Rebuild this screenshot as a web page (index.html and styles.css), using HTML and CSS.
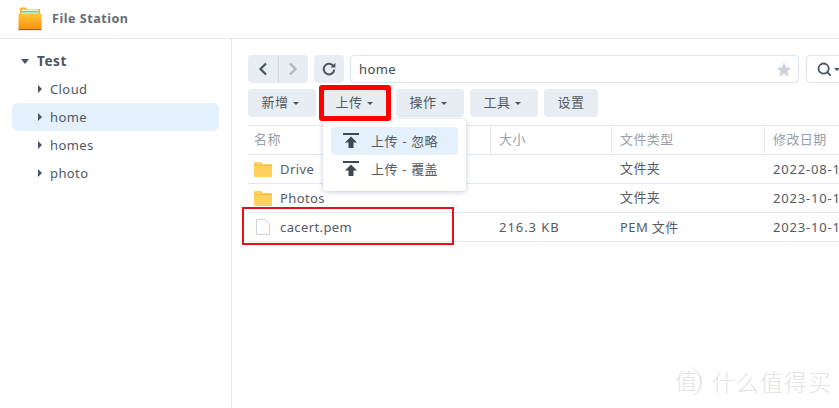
FILE: index.html
```html
<!DOCTYPE html>
<html lang="zh">
<head>
    <meta charset="UTF-8">
    <meta name="viewport" content="width=device-width, initial-scale=1.0">
    <title>File Station</title>
    <link rel="stylesheet" href="styles.css">
</head>
<body>
    <header class="titlebar">
        <svg class="app-icon" width="24" height="24" viewBox="0 0 24 24">
            <defs>
                <linearGradient id="folderFill" x1="0" y1="0" x2="0" y2="1">
                    <stop offset="0" stop-color="#ffc83a"/>
                    <stop offset="1" stop-color="#fb8d0b"/>
                </linearGradient>
            </defs>
            <path d="M2 2 Q2 0.5 3.5 0.5 H8 L9.5 2 H22 V8 H2 Z" fill="#f8ae27"/>
            <rect x="3.5" y="2.5" width="17" height="5" fill="#edf3ea"/>
            <rect x="3.5" y="4" width="17" height="1.5" fill="#6cc9b4"/>
            <path d="M0.5 6.5 H23.5 V22 Q23.5 23 22.5 23 H1.5 Q0.5 23 0.5 22 Z" fill="url(#folderFill)"/>
            <rect x="0.5" y="22" width="23" height="1.2" fill="#8a6a3a"/>
        </svg>
        <span class="app-name">File Station</span>
    </header>

    <div class="window">
        <aside class="sidebar">
            <div class="tree-root"><span class="caret-down"></span>Test</div>
            <div class="tree-item"><span class="caret-right"></span>Cloud</div>
            <div class="tree-item active"><span class="caret-right"></span>home</div>
            <div class="tree-item"><span class="caret-right"></span>homes</div>
            <div class="tree-item"><span class="caret-right"></span>photo</div>
        </aside>

        <main class="content">
            <div class="toolbar">
                <div class="nav-group">
                    <button class="nav-btn">
                        <svg width="10" height="14" viewBox="0 0 10 14"><path d="M8 1.5 L2.5 7 L8 12.5" fill="none" stroke="#4a5360" stroke-width="2.2"/></svg>
                    </button>
                    <button class="nav-btn">
                        <svg width="10" height="14" viewBox="0 0 10 14"><path d="M2 1.5 L7.5 7 L2 12.5" fill="none" stroke="#aeb4bc" stroke-width="2.2"/></svg>
                    </button>
                </div>
                <button class="refresh-btn">
                    <svg width="14" height="14" viewBox="0 0 14 14"><path d="M11.6 4.4 A5.3 5.3 0 1 0 12.3 7.6" fill="none" stroke="#4a5360" stroke-width="2"/><path d="M8.6 5.6 H13.4 V0.8 Z" fill="#4a5360"/></svg>
                </button>
                <div class="path-box">
                    <span>home</span>
                    <svg width="16" height="15" viewBox="0 0 16 15"><path d="M8 0.5 L10 5.4 L15.4 5.8 L11.2 9.2 L12.6 14.5 L8 11.6 L3.4 14.5 L4.8 9.2 L0.6 5.8 L6 5.4 Z" fill="#c9d2dc"/></svg>
                </div>
                <div class="search-box">
                    <svg width="15" height="15" viewBox="0 0 17 17"><circle cx="7.5" cy="7.5" r="5.8" fill="none" stroke="#4a5360" stroke-width="2"/><path d="M11.5 11.5 L15.5 15.5" stroke="#4a5360" stroke-width="2"/></svg>
                    <span class="caret-small"></span>
                </div>
            </div>

            <div class="actions">
                <button class="action">新增<span class="caret-small"></span></button>
                <button class="action">上传<span class="caret-small"></span></button>
                <button class="action">操作<span class="caret-small"></span></button>
                <button class="action">工具<span class="caret-small"></span></button>
                <button class="action plain">设置</button>
            </div>

            <div class="file-table">
                <div class="row head">
                    <div class="zh">名称</div>
                    <div class="zh">大小</div>
                    <div class="zh">文件类型</div>
                    <div class="zh">修改日期</div>
                </div>
                <div class="row">
                    <div class="name">
                        <svg width="18" height="15" viewBox="0 0 18 15"><path d="M0 1 Q0 0 1 0 H7 L9 2 H17 Q18 2 18 3 V14 Q18 15 17 15 H1 Q0 15 0 14 Z" fill="#ffd15c"/><rect x="0" y="3" width="18" height="1" fill="#f5bd3d"/></svg>
                        Drive
                    </div>
                    <div></div>
                    <div class="zh">文件夹</div>
                    <div class="num date">2022-08-1</div>
                </div>
                <div class="row">
                    <div class="name">
                        <svg width="18" height="15" viewBox="0 0 18 15"><path d="M0 1 Q0 0 1 0 H7 L9 2 H17 Q18 2 18 3 V14 Q18 15 17 15 H1 Q0 15 0 14 Z" fill="#ffd15c"/><rect x="0" y="3" width="18" height="1" fill="#f5bd3d"/></svg>
                        Photos
                    </div>
                    <div></div>
                    <div class="zh">文件夹</div>
                    <div class="num date">2023-10-1</div>
                </div>
                <div class="row">
                    <div class="name">
                        <svg class="file-icon" width="18" height="16" viewBox="0 0 18 16"><path d="M2.5 0.5 H11 L15.5 4.5 V15.5 H2.5 Z" fill="#fff" stroke="#cdd3da"/></svg>
                        cacert.pem
                    </div>
                    <div class="num">216.3 KB</div>
                    <div class="zh-mixed">PEM 文件</div>
                    <div class="num date">2023-10-1</div>
                </div>
            </div>
        </main>
    </div>

    <!-- overlays -->
    <div class="menu">
        <div class="menu-item active">
            <svg width="16" height="15" viewBox="0 0 16 15"><path d="M0 1 H16" stroke="#3f4751" stroke-width="2"/><path d="M8 3.5 L14 9.5 H10.5 V15 H5.5 V9.5 H2 Z" fill="#3f4751"/></svg>
            上传 - 忽略
        </div>
        <div class="menu-item">
            <svg width="16" height="15" viewBox="0 0 16 15"><path d="M0 1 H16" stroke="#3f4751" stroke-width="2"/><path d="M8 3.5 L14 9.5 H10.5 V15 H5.5 V9.5 H2 Z" fill="#3f4751"/></svg>
            上传 - 覆盖
        </div>
    </div>
    <div class="mark-upload"></div>
    <div class="mark-file"></div>
    <div class="watermark"><span class="watermark-seal">值</span>什么值得买</div>
</body>
</html>
```

FILE: styles.css
```css
* {
    box-sizing: border-box;
}
html, body {
    height: 100%;
}
body {
    margin: 0;
    overflow: hidden;
    background-color: #fff;
    color: #414b55;
    font-family: "Noto Sans", "Noto Sans CJK SC", sans-serif;
    font-size: 13px;
    letter-spacing: 0.4px;
    display: flex;
    flex-direction: column;
}
button {
    font: inherit;
    color: inherit;
    letter-spacing: inherit;
    border: none;
    padding: 0;
}
.titlebar {
    height: 39px;
    flex: none;
    display: flex;
    align-items: center;
    padding-left: 18px;
    padding-bottom: 1px;
    border-bottom: 1px solid #e3e8ef;
}
.app-icon {
    margin-right: 10px;
}
.app-name {
    font-size: 12.5px;
    font-weight: 700;
    letter-spacing: 0.55px;
    color: #646b75;
}
.window {
    flex: 1;
    min-height: 0;
    display: flex;
}
.sidebar {
    width: 232px;
    flex: none;
    border-right: 1px solid #e3e8ef;
    padding: 8px 12px 0;
}
.tree-root {
    height: 28px;
    display: flex;
    align-items: center;
    padding-left: 9px;
    font-size: 13.5px;
    font-weight: 700;
    letter-spacing: 0.6px;
    color: #4a5360;
}
.tree-item {
    height: 28px;
    display: flex;
    align-items: center;
    padding-left: 26px;
    border-radius: 6px;
    color: #4f5863;
}
.tree-item.active {
    background-color: #e4f0fc;
}
.caret-down {
    width: 0;
    height: 0;
    margin-right: 8px;
    border-left: 4px solid transparent;
    border-right: 4px solid transparent;
    border-top: 5px solid #4a5360;
}
.caret-right {
    width: 0;
    height: 0;
    margin-right: 8px;
    border-top: 4px solid transparent;
    border-bottom: 4px solid transparent;
    border-left: 4px solid #4a5360;
}
.caret-small {
    display: inline-block;
    width: 0;
    height: 0;
    margin-left: 5px;
    vertical-align: middle;
    border-left: 3px solid transparent;
    border-right: 3px solid transparent;
    border-top: 3px solid #4a5360;
}
.content {
    flex: 1;
    min-width: 0;
    padding: 16px 0 0 16px;
}
.toolbar {
    display: flex;
    height: 28px;
    width: 620px;
}
.nav-group {
    display: flex;
    width: 60px;
    border-radius: 4px;
    overflow: hidden;
}
.nav-btn {
    flex: 1;
    background-color: #e8edf3;
    display: flex;
    align-items: center;
    justify-content: center;
}
.nav-btn + .nav-btn {
    border-left: 1px solid #cfd6df;
}
.refresh-btn {
    width: 30px;
    margin-left: 6px;
    background-color: #e8edf3;
    border-radius: 4px;
    display: flex;
    align-items: center;
    justify-content: center;
}
.path-box {
    width: 449px;
    margin-left: 6px;
    border: 1px solid #dde5ee;
    border-radius: 4px;
    display: flex;
    align-items: center;
    justify-content: space-between;
    padding: 0 6px 0 8px;
}
.search-box {
    width: 50px;
    flex: none;
    margin-left: 7px;
    border: 1px solid #dde5ee;
    border-radius: 4px;
    display: flex;
    align-items: center;
    padding-left: 10px;
}
.search-box .caret-small {
    margin-left: 2px;
}
.actions {
    display: flex;
    gap: 6px;
    margin-top: 6px;
}
.action {
    width: 68px;
    height: 28px;
    padding: 0 3px 3px 0;
    background-color: #e8edf3;
    border-radius: 4px;
    color: #4f5863;
}
.action.plain {
    width: 54px;
    padding-right: 0;
}
.file-table {
    margin-top: 8px;
    border-top: 1px solid #e3e8ef;
}
.row {
    display: grid;
    grid-template-columns: 242px 121px 153px 1fr;
    height: 29px;
    border-bottom: 1px solid #e3e8ef;
    white-space: nowrap;
    color: #525b66;
}
.row > div {
    display: flex;
    align-items: center;
    padding-left: 9px;
    min-width: 0;
}
.row > .zh {
    padding-bottom: 3px;
}
.row > .zh-mixed {
    padding-bottom: 1px;
}
.row > .num {
    letter-spacing: 0.95px;
}
.row > .date {
    letter-spacing: 0.8px;
}
.row.head {
    color: #98a0a9;
}
.row.head > div:first-child {
    padding-left: 6px;
}
.row.head > div + div {
    border-left: 1px solid #e3e8ef;
    padding-left: 8px;
}
.row > .name {
    gap: 8px;
    padding-left: 6px;
}
.menu {
    position: absolute;
    left: 323px;
    top: 119px;
    width: 143px;
    height: 72px;
    background-color: #fff;
    border-radius: 4px;
    box-shadow: 0 1px 5px rgba(60, 80, 110, 0.3);
    padding: 8px;
}
.menu-item {
    height: 28px;
    display: flex;
    align-items: center;
    gap: 12px;
    padding-left: 12px;
    padding-bottom: 2px;
    border-radius: 4px;
    word-spacing: 0.6px;
    color: #525b66;
}
.menu-item.active {
    background-color: #e4f0fc;
}
.mark-upload {
    position: absolute;
    left: 319px;
    top: 85px;
    width: 72px;
    height: 36px;
    border: 5px solid #fe0000;
    border-radius: 3px;
}
.mark-file {
    position: absolute;
    left: 242px;
    top: 207px;
    width: 212px;
    height: 38px;
    border: 2px solid #ea0f16;
}
.watermark {
    position: absolute;
    left: 672px;
    top: 364px;
    display: flex;
    align-items: center;
    white-space: nowrap;
    font-size: 23px;
    font-weight: 300;
    line-height: 36px;
    letter-spacing: 1px;
    color: #e4e4e4;
}
.watermark-seal {
    width: 30px;
    height: 30px;
    margin-right: 10px;
    font-size: 22px;
    line-height: 27px;
    letter-spacing: 0;
    text-align: center;
    border-right: 2px solid #e4e4e4;
    border-radius: 50%;
}
```
